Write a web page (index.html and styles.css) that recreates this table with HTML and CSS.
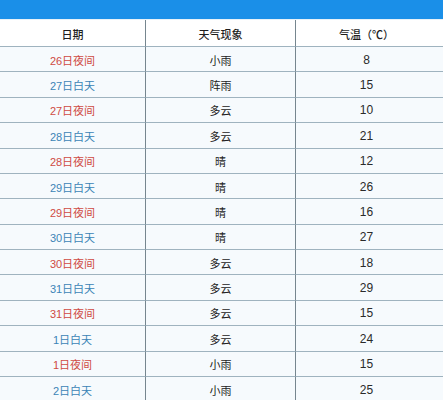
FILE: index.html
```html
<!DOCTYPE html>
<html lang="zh">
<head>
<meta charset="utf-8">
<link rel="stylesheet" href="styles.css">
</head>
<body>
<div class="topbar"></div>
<div class="table">
  <div class="cell head">日期</div><div class="cell head">天气现象</div><div class="cell head c3">气温（℃）</div>
  <div class="cell night">26日夜间</div><div class="cell">小雨</div><div class="cell c3 num">8</div>
  <div class="cell day">27日白天</div><div class="cell">阵雨</div><div class="cell c3 num">15</div>
  <div class="cell night">27日夜间</div><div class="cell">多云</div><div class="cell c3 num">10</div>
  <div class="cell day">28日白天</div><div class="cell">多云</div><div class="cell c3 num">21</div>
  <div class="cell night">28日夜间</div><div class="cell">晴</div><div class="cell c3 num">12</div>
  <div class="cell day">29日白天</div><div class="cell">晴</div><div class="cell c3 num">26</div>
  <div class="cell night">29日夜间</div><div class="cell">晴</div><div class="cell c3 num">16</div>
  <div class="cell day">30日白天</div><div class="cell">晴</div><div class="cell c3 num">27</div>
  <div class="cell night">30日夜间</div><div class="cell">多云</div><div class="cell c3 num">18</div>
  <div class="cell day">31日白天</div><div class="cell">多云</div><div class="cell c3 num">29</div>
  <div class="cell night">31日夜间</div><div class="cell">多云</div><div class="cell c3 num">15</div>
  <div class="cell day">1日白天</div><div class="cell">多云</div><div class="cell c3 num">24</div>
  <div class="cell night">1日夜间</div><div class="cell">小雨</div><div class="cell c3 num">15</div>
  <div class="cell day">2日白天</div><div class="cell">小雨</div><div class="cell c3 num">25</div>
</div>
</body>
</html>
```
FILE: styles.css
```css
html, body {
  margin: 0;
  padding: 0;
  background: #ffffff;
}
body {
  font-family: "Liberation Sans", "Noto Sans CJK SC", sans-serif;
  font-size: 11px;
  color: #222222;
  overflow: hidden;
}
.topbar {
  height: 19px;
  background: #1a8fe8;
  border-bottom: 1px solid #e6f1f8;
}
.table {
  display: grid;
  grid-template-columns: 146px 150px 1fr;
  grid-template-rows: 27px;
  grid-auto-rows: 25.38px;
  background: #f6fafd;
}
.cell {
  box-sizing: border-box;
  display: flex;
  align-items: center;
  justify-content: center;
  border-bottom: 1px solid #9fb3bf;
  border-right: 1px solid #76868f;
  padding-top: 1px;
}
.c3 {
  border-right: none;
  padding-right: 6px;
}
.head {
  background: #ffffff;
  color: #1e1e1e;
  font-size: 11px;
  font-weight: 500;
}
.num {
  font-size: 12px;
  color: #2a2a2a;
}
.night {
  color: #cf4a43;
}
.day {
  color: #3b84b6;
}
```
